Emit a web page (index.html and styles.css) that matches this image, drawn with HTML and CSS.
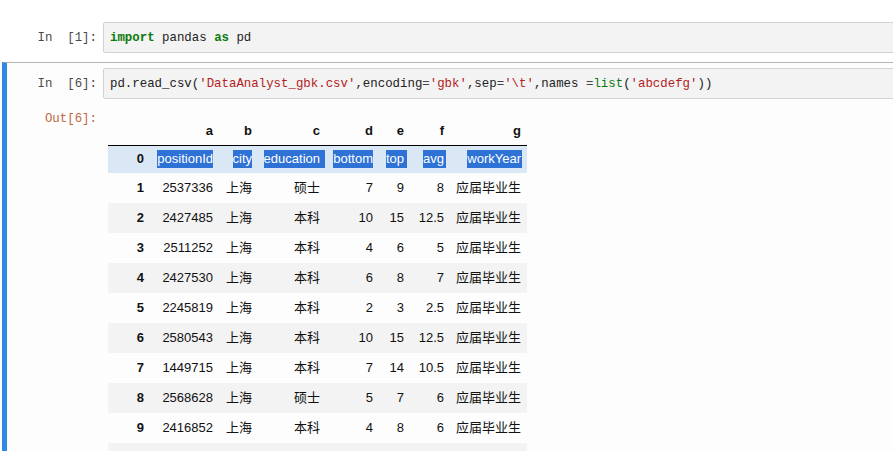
FILE: index.html
```html
<!DOCTYPE html>
<html>
<head>
<meta charset="utf-8">
<link rel="stylesheet" href="styles.css">
</head>
<body>
<div class="notebook">
  <div class="cell cell-plain">
    <div class="row">
      <div class="prompt in-prompt">In&nbsp;&nbsp;[1]:</div>
      <div class="input-area"><pre class="code"><span class="kw">import</span> pandas <span class="kw">as</span> pd</pre></div>
    </div>
  </div>
  <div class="cell cell-selected">
    <div class="row">
      <div class="prompt in-prompt">In&nbsp;&nbsp;[6]:</div>
      <div class="input-area"><pre class="code">pd.read_csv(<span class="s">'DataAnalyst_gbk.csv'</span>,encoding<span class="o">=</span><span class="s">'gbk'</span>,sep<span class="o">=</span><span class="s">'\t'</span>,names <span class="o">=</span><span class="bi">list</span>(<span class="s">'abcdefg'</span>))</pre></div>
    </div>
    <div class="row output-row">
      <div class="prompt out-prompt">Out[6]:</div>
      <div class="output">
        <table class="df">
          <colgroup>
            <col class="c-idx"><col class="c-a"><col class="c-b"><col class="c-c"><col class="c-d"><col class="c-e"><col class="c-f"><col class="c-g">
          </colgroup>
          <thead>
            <tr><th></th><th>a</th><th>b</th><th>c</th><th>d</th><th>e</th><th>f</th><th>g</th></tr>
          </thead>
          <tbody>
            <tr class="hover"><th>0</th><td><span class="sel">positionId</span></td><td><span class="sel">city</span></td><td><span class="sel sel-ext5">education</span></td><td><span class="sel">bottom</span></td><td><span class="sel sel-ext3">top</span></td><td><span class="sel sel-ext2">avg</span></td><td><span class="sel sel-ext1">workYear</span></td></tr>
            <tr><th>1</th><td>2537336</td><td>上海</td><td>硕士</td><td>7</td><td>9</td><td>8</td><td>应届毕业生</td></tr>
            <tr><th>2</th><td>2427485</td><td>上海</td><td>本科</td><td>10</td><td>15</td><td>12.5</td><td>应届毕业生</td></tr>
            <tr><th>3</th><td>2511252</td><td>上海</td><td>本科</td><td>4</td><td>6</td><td>5</td><td>应届毕业生</td></tr>
            <tr><th>4</th><td>2427530</td><td>上海</td><td>本科</td><td>6</td><td>8</td><td>7</td><td>应届毕业生</td></tr>
            <tr><th>5</th><td>2245819</td><td>上海</td><td>本科</td><td>2</td><td>3</td><td>2.5</td><td>应届毕业生</td></tr>
            <tr><th>6</th><td>2580543</td><td>上海</td><td>本科</td><td>10</td><td>15</td><td>12.5</td><td>应届毕业生</td></tr>
            <tr><th>7</th><td>1449715</td><td>上海</td><td>本科</td><td>7</td><td>14</td><td>10.5</td><td>应届毕业生</td></tr>
            <tr><th>8</th><td>2568628</td><td>上海</td><td>硕士</td><td>5</td><td>7</td><td>6</td><td>应届毕业生</td></tr>
            <tr><th>9</th><td>2416852</td><td>上海</td><td>本科</td><td>4</td><td>8</td><td>6</td><td>应届毕业生</td></tr>
            <tr class="blank"><th></th><td></td><td></td><td></td><td></td><td></td><td></td><td></td></tr>
          </tbody>
        </table>
      </div>
    </div>
  </div>
</div>
</body>
</html>
```

FILE: styles.css
```css
html, body {
  margin: 0;
  padding: 0;
  background: #ffffff;
  overflow: hidden;
  height: 451px;
}

.notebook {
  width: 1100px;
}

.cell {
  margin-left: 2px;
  border-left: 5px solid transparent;
}

.cell-plain {
  padding: 22px 0 8px 0;
}

.cell-selected {
  border-top: 1px solid #b3b3b3;
  border-left-color: #2f8ae6;
  padding-top: 5px;
  background: #fdfdfd;
}

.row {
  display: grid;
  grid-template-columns: 90px 1fr;
  column-gap: 6px;
}

.prompt {
  font-family: "Liberation Mono", "DejaVu Sans Mono", monospace;
  font-size: 12.4px;
  text-align: right;
  white-space: nowrap;
}

.in-prompt {
  color: #4a4a4a;
  line-height: 32px;
}

.out-prompt {
  color: #c0683f;
  line-height: 20px;
}

.input-area {
  background: #f3f3f3;
  border: 1px solid #d2d2d2;
  border-radius: 2px;
  height: 29px;
  box-sizing: content-box;
}

.code {
  margin: 0;
  padding: 1px 6px 0 6px;
  font-family: "Liberation Mono", "DejaVu Sans Mono", monospace;
  font-size: 12.4px;
  line-height: 28px;
  color: #222;
  white-space: pre;
}

.kw {
  color: #0b7a0b;
  font-weight: bold;
}

.s {
  color: #b32222;
}

.o {
  color: #444;
}

.bi {
  color: #0b7a0b;
}

.output-row {
  padding-top: 9px;
}

.output {
  padding-left: 5px;
}

.df {
  border-collapse: collapse;
  table-layout: fixed;
  width: 419px;
  font-family: "Liberation Sans", Arial, "Noto Sans CJK SC", sans-serif;
  font-size: 13px;
  color: #111;
}

.c-idx { width: 42px; }
.c-a { width: 69px; }
.c-b { width: 39px; }
.c-c { width: 68px; }
.c-d { width: 53px; }
.c-e { width: 31px; }
.c-f { width: 40px; }
.c-g { width: 77px; }

.df th, .df td {
  text-align: right;
  padding: 0 6px 0 0;
  white-space: nowrap;
}

.df thead th {
  font-weight: bold;
  height: 30px;
  vertical-align: bottom;
  padding-bottom: 6px;
  line-height: 16px;
  border-bottom: 1px solid #000;
}

.df tbody th {
  font-weight: bold;
}

.df tbody tr {
  height: 30px;
}

.df tbody tr:nth-child(odd) {
  background: #f3f3f3;
}

.df tbody tr.hover {
  background: #dae7f4;
  height: 27px;
}

.df tbody td, .df tbody th {
  vertical-align: middle;
  line-height: 18px;
}

.sel {
  display: inline-block;
  background: #2f72d6;
  color: #ffffff;
  line-height: 18px;
}

.sel-ext5 { padding-right: 5px; margin-right: -5px; }
.sel-ext3 { padding-right: 3px; margin-right: -3px; }
.sel-ext2 { padding-right: 2px; margin-right: -2px; }
.sel-ext1 { padding-right: 1px; margin-right: -1px; }
```
